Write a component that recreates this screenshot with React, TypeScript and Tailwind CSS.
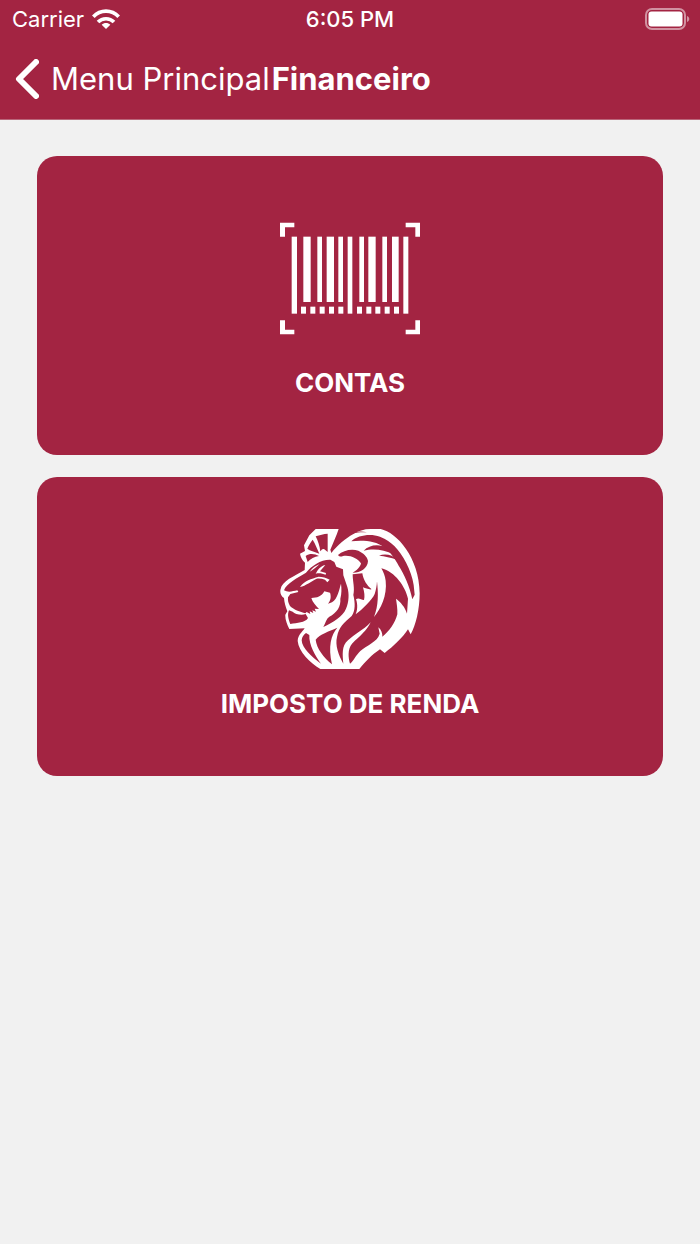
import type { ReactNode } from "react";

function WifiIcon() {
  return (
    <svg viewBox="0 0 84 60" className="h-5 w-7" aria-hidden="true">
      <g fill="none" stroke="#fff" strokeWidth="11">
        <path d="M4 23C25 1 59 1 80 23" />
        <path d="M18 39C31 26 53 26 66 39" />
      </g>
      <path d="M29 47C36 40 48 40 55 47L42 60Z" fill="#fff" />
    </svg>
  );
}

function BatteryIcon() {
  return (
    <svg viewBox="0 0 46 22" className="h-[22px] w-[46px]" aria-hidden="true">
      <rect x="1" y="1" width="39" height="20" rx="6" fill="none" stroke="#fff" strokeOpacity="0.5" strokeWidth="2" />
      <rect x="3.500" y="3.500" width="34" height="15" rx="3" fill="#fff" />
      <path d="M42 8C45 9 45 13 42 14Z" fill="#fff" fillOpacity="0.5" />
    </svg>
  );
}

function BackIcon() {
  return (
    <svg viewBox="0 0 24 40" className="h-10 w-6" aria-hidden="true">
      <path d="M21 3L4 20L21 37" fill="none" stroke="#fff" strokeWidth="6" strokeLinecap="round" strokeLinejoin="round" />
    </svg>
  );
}

const bars = [
  [65, 16, 231], [100, 22, 196], [142, 14, 196], [170, 22, 196], [205, 14, 196], [233, 14, 231],
  [268, 14, 196], [295, 22, 196], [337, 14, 196], [366, 20, 196], [400, 15, 231],
];
const ticks = [93, 121, 149, 177, 205, 261, 289, 316, 344, 372];

function BarcodeIcon() {
  return (
    <svg viewBox="30 -20 420 420" className="size-[140px]" fill="#fff" aria-hidden="true">
      <path d="M30 24H73V38H45V66H30ZM407 24H450V66H436V38H407ZM30 317H45V345H73V359H30ZM436 317H450V359H407V345H436Z" />
      {bars.map(([x, w, h]) => (
        <rect key={x} x={x} y="66" width={w} height={h} />
      ))}
      {ticks.map((x) => (
        <rect key={x} x={x} y="276" width="15" height="21" />
      ))}
    </svg>
  );
}

function LionIcon() {
  return (
    <svg viewBox="30 27 420 420" className="size-[140px]" aria-hidden="true">
      <path
        fill="#fff"
        d="M137 27H206C199 48 190 68 181 89L184 99C203 75 228 55 249 43C264 33 282 27 302 27H332C380 37 448 112 449 220C449 268 437 318 422 343L414 328C397 354 370 379 344 399L330 388C305 405 288 423 268 447H151C120 428 86 396 83 363C84 345 96 337 104 325L58 327C51 312 45 297 46 284L52 274C47 260 43 248 42 234C32 228 29 215 32 207C35 184 73 168 104 150L105 128C96 120 92 111 90 101L105 93L102 76L118 46Z"
      />
      <g fill="#a32442">
        <path d="M137 49C149 45 161 42 173 41L173 96L163 88C158 84 154 90 151 94C149 77 144 63 137 49Z" />
        <path d="M128 59C136 72 142 87 148 101L119 91L112 86C116 76 122 67 128 59Z" />
        <path d="M107 108C119 99 134 101 147 108C133 109 122 117 113 126Z" />
        <path d="M42 211C49 190 82 174 108 158C125 137 153 118 181 119L193 126L199 140L219 148L220 166L232 201C238 220 237 247 228 266C218 290 190 306 160 321C167 308 169 296 178 290C201 278 213 259 211 236C215 221 215 206 213 191C207 209 204 235 186 247L174 251C184 240 183 226 180 218L163 214C155 229 141 234 124 234C127 246 138 257 147 267L134 266L138 275L127 271L130 279L119 274L121 282L110 276L106 280C91 276 69 268 60 258C55 249 53 242 54 232L61 222L85 216L82 211C68 214 54 218 42 211Z" />
        <path d="M57 271L68 275C75 282 94 287 107 282L114 294C105 309 82 308 61 312C56 301 51 284 57 271Z" />
        <path d="M108 339L118 345C116 374 137 409 153 431C125 411 96 384 95 361C96 351 100 345 108 339Z" />
        <path d="M137 359C150 342 175 335 202 323C183 345 174 379 186 433C161 412 140 386 137 359Z" />
        <path d="M248 163L277 160C280 180 291 197 305 208C295 209 287 205 279 202C283 217 285 228 282 240C273 239 265 232 258 238C264 255 262 272 257 283C277 268 306 240 314 222C318 210 320 200 321 184C325 220 326 257 312 291C332 266 352 227 347 182C345 168 341 157 334 145C375 155 406 200 414 236L411 281C405 261 391 245 378 236C380 251 383 266 382 283C375 310 358 334 337 350C338 341 334 329 325 322L329 341C322 366 291 375 271 393C257 406 252 422 240 431C235 413 232 388 246 371C269 349 292 330 302 307C278 332 256 341 234 361C214 378 218 405 220 431C205 405 195 375 201 351C206 321 222 308 245 288C256 272 256 250 250 225C255 205 248 185 248 163Z" />
        <path d="M204 105C219 91 245 85 265 92C279 99 292 109 294 123C293 147 268 159 248 158C260 151 271 142 273 130C263 115 240 104 219 108C213 111 208 110 204 105Z" />
        <path d="M244 64C263 46 300 40 330 50C349 57 362 68 373 78C398 103 424 150 431 195L434 224L427 238C420 201 402 161 386 137C375 117 360 94 341 82C319 63 280 60 244 64Z" />
        <path d="M281 92C298 74 330 70 354 86L370 103C342 87 306 85 281 92Z" />
        <path d="M327 107C345 100 368 104 381 119C362 112 345 109 327 107Z" />
        <path d="M245 41C265 36 278 36 291 37C273 32 257 34 245 41Z" />
      </g>
      <g fill="#fff">
        <path d="M119 155C126 144 137 137 149 132C137 143 129 149 119 155Z" />
        <path d="M166 135C149 139 143 151 137 161C148 158 158 161 167 164L168 159L150 154Z" />
        <path d="M90 201C104 181 123 177 146 170C157 170 169 173 179 179L172 187L165 179C157 176 148 175 140 176C124 183 107 198 90 201Z" />
      </g>
    </svg>
  );
}

function MenuCard({ label, children }: { label: string; children: ReactNode }) {
  return (
    <button
      type="button"
      className="flex w-full flex-col items-center rounded-[20px] bg-[#a32442] pt-[52px] pb-14 text-white"
    >
      {children}
      <span className="mt-[19px] text-[26px] leading-8 font-bold">{label}</span>
    </button>
  );
}

export default function App() {
  return (
    <div className="min-h-screen bg-[#f1f1f1] font-['Inter',sans-serif]">
      <header className="border-b border-[#b9667a] bg-[#a32442] text-white">
        <div className="grid h-[38px] grid-cols-3 items-center text-[22px] leading-7">
          <div className="flex items-center gap-2 pl-3">
            <span>Carrier</span>
            <WifiIcon />
          </div>
          <time className="text-center font-medium">6:05 PM</time>
          <div className="flex justify-end pr-[9px]">
            <BatteryIcon />
          </div>
        </div>
        <nav className="flex h-[81px] items-center pl-[15px] text-[31px] leading-10">
          <a href="#menu" className="flex items-center gap-3">
            <BackIcon />
            <span>Menu Principal</span>
          </a>
          <h1 className="ml-0.5 font-bold">Financeiro</h1>
        </nav>
      </header>
      <main className="flex flex-col gap-[22px] px-[37px] py-9">
        <MenuCard label="CONTAS">
          <BarcodeIcon />
        </MenuCard>
        <MenuCard label="IMPOSTO DE RENDA">
          <LionIcon />
        </MenuCard>
      </main>
    </div>
  );
}
